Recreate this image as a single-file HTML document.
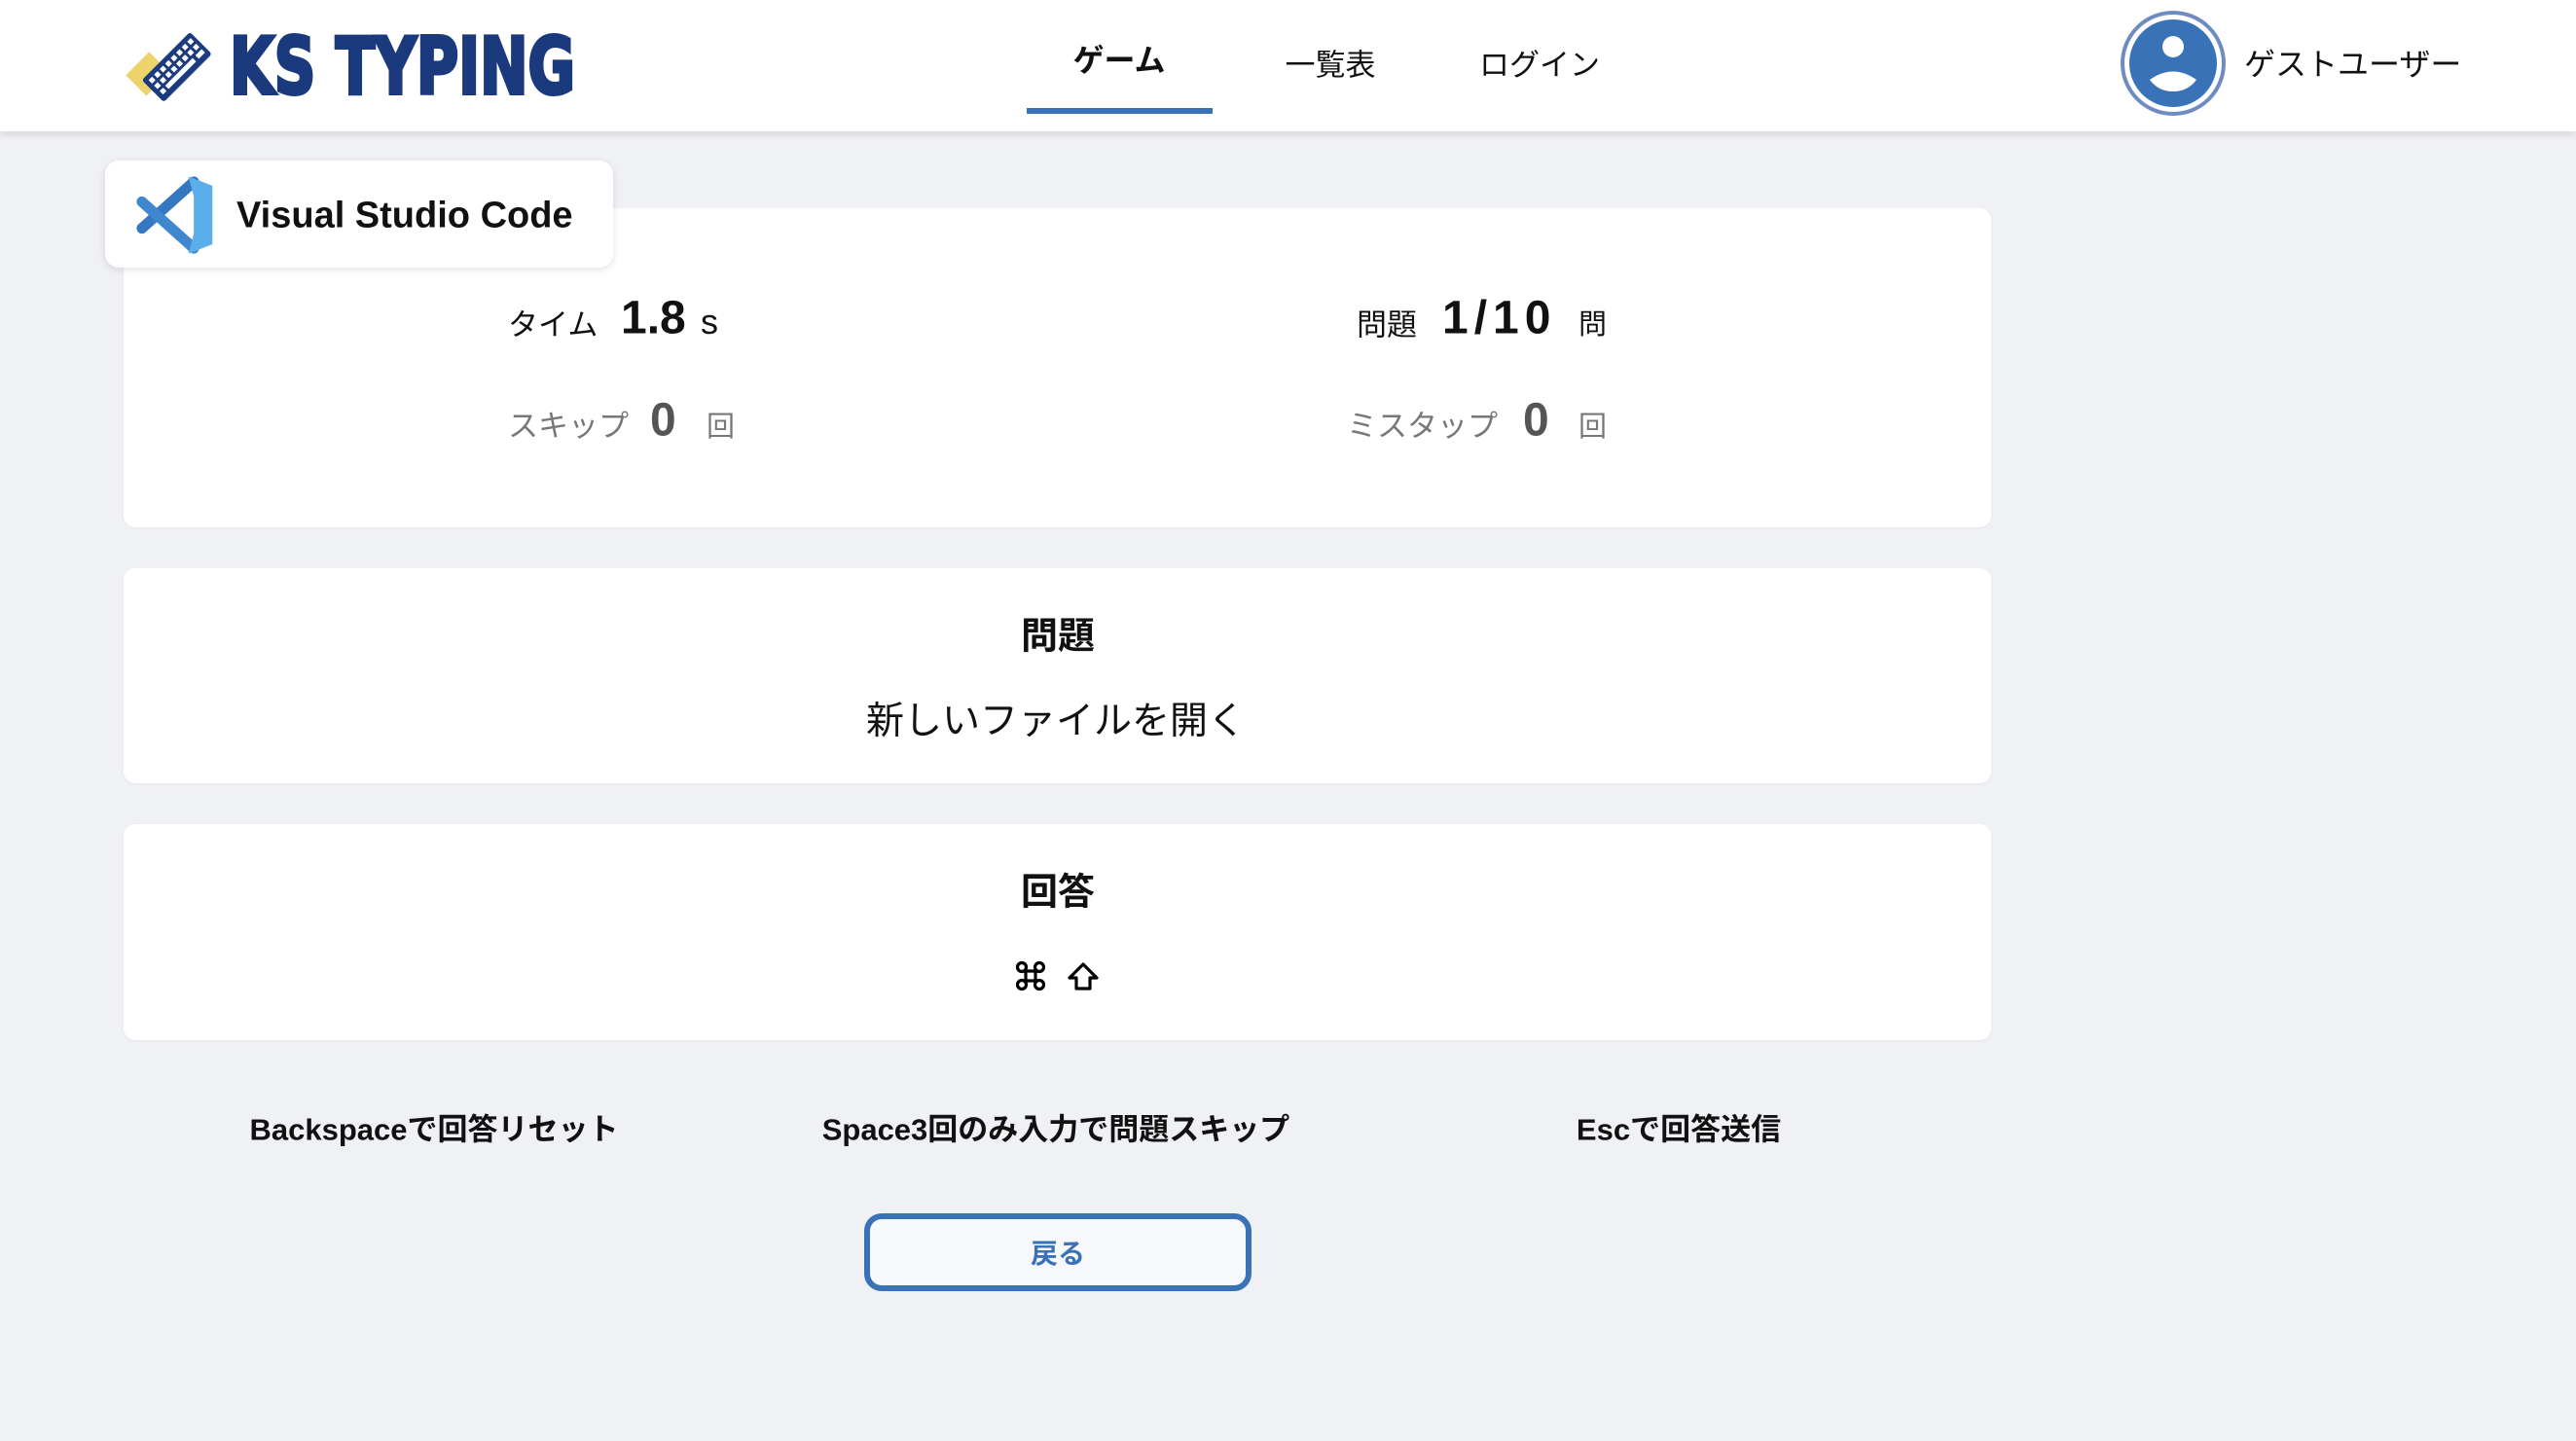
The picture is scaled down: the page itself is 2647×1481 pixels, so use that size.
<!DOCTYPE html>
<html><head><meta charset="utf-8"><style>
*{margin:0;padding:0;box-sizing:border-box}
body{width:2647px;height:1481px;background:#f0f1f5;font-family:"Liberation Sans","Noto Sans CJK JP",sans-serif;position:relative;overflow:hidden;color:#111}
.a{position:absolute;white-space:nowrap}
.hdr{position:absolute;left:0;top:0;width:2647px;height:135px;background:#fff;box-shadow:0 3px 8px rgba(0,0,0,.12)}
.card{position:absolute;left:127px;width:1919px;background:#fff;border-radius:12px;box-shadow:0 1px 3px rgba(0,0,0,.05)}
.c{transform:translate(-50%,-50%)}
.l{transform:translateY(-50%)}
</style></head><body>
<div class="hdr"></div>
<svg class="a" style="left:126px;top:26px" width="100" height="80" viewBox="0 0 100 80">
 <g transform="rotate(-45 40 40)"><rect x="6" y="22" width="34" height="30" fill="#ecd36a"/></g>
 <g transform="rotate(-45 55 45)"><rect x="22" y="28" width="70" height="32" rx="3" fill="#1c3a7e"/>
 <g fill="#fff"><rect x="27" y="33" width="5" height="5"/><rect x="35" y="33" width="5" height="5"/><rect x="43" y="33" width="5" height="5"/><rect x="51" y="33" width="5" height="5"/><rect x="59" y="33" width="5" height="5"/><rect x="67" y="33" width="5" height="5"/><rect x="75" y="33" width="5" height="5"/><rect x="83" y="33" width="5" height="5"/>
 <rect x="27" y="41" width="5" height="5"/><rect x="35" y="41" width="5" height="5"/><rect x="43" y="41" width="5" height="5"/><rect x="51" y="41" width="5" height="5"/><rect x="59" y="41" width="5" height="5"/><rect x="67" y="41" width="5" height="5"/><rect x="75" y="41" width="5" height="5"/><rect x="83" y="41" width="5" height="5"/>
 <rect x="27" y="49" width="5" height="5"/><rect x="35" y="49" width="40" height="5"/><rect x="79" y="49" width="9" height="5"/></g></g>
</svg>
<svg class="a" style="left:236px;top:30px" width="360" height="70" viewBox="0 0 360 70"><text x="0" y="66" font-family="DejaVu Sans" font-weight="bold" font-size="80" fill="#1b3a7e" stroke="#1b3a7e" stroke-width="4" textLength="355" lengthAdjust="spacingAndGlyphs">KS TYPING</text></svg>
<div class="a c" style="left:1150px;top:60px;font-size:32px;font-weight:bold">ゲーム</div>
<div class="a" style="left:1055px;top:111px;width:191px;height:6px;background:#3a72b8"></div>
<div class="a c" style="left:1367px;top:64px;font-size:31px">一覧表</div>
<div class="a c" style="left:1582px;top:64px;font-size:31px">ログイン</div>
<svg class="a" style="left:2178px;top:10px" width="110" height="110" viewBox="0 0 110 110">
 <circle cx="55" cy="55" r="52" fill="none" stroke="#6f8cc2" stroke-width="4"/>
 <circle cx="55" cy="55" r="45" fill="#3a72b8"/>
 <circle cx="55" cy="38" r="11" fill="#fff"/>
 <path d="M31 72 Q55 55 79 72 Q70 84 55 84 Q40 84 31 72 Z" fill="#fff"/>
</svg>
<div class="a l" style="left:2306px;top:64px;font-size:32px">ゲストユーザー</div>

<div class="card" style="top:214px;height:328px"></div>
<div class="a" style="left:108px;top:165px;width:522px;height:110px;background:#fff;border-radius:14px;box-shadow:0 2px 8px rgba(0,0,0,.12)"></div>
<svg class="a" style="left:138px;top:180px" width="84" height="82" viewBox="0 0 60 60">
 <line x1="44" y1="5" x2="5" y2="40" stroke="#3577c0" stroke-width="8" stroke-linecap="round"/>
 <line x1="44" y1="55" x2="5" y2="20" stroke="#3f87cf" stroke-width="8" stroke-linecap="round"/>
 <path d="M40 1 L58 8 V52 L40 59 L44 44 V16 Z" fill="#5aaeea"/>
</svg>
<div class="a l" style="left:243px;top:222px;font-size:38px;font-weight:bold">Visual Studio Code</div>

<div class="a l" style="left:522px;top:331px;font-size:31px">タイム</div>
<div class="a l" style="left:638px;top:327px;font-size:48px;font-weight:bold">1.8</div>
<div class="a l" style="left:720px;top:331px;font-size:36px">s</div>
<div class="a l" style="left:1394px;top:331px;font-size:31px">問題</div>
<div class="a l" style="left:1482px;top:327px;font-size:48px;font-weight:bold;letter-spacing:6px">1/10</div>
<div class="a l" style="left:1622px;top:331px;font-size:29px">問</div>
<div class="a l" style="left:522px;top:435px;font-size:31px;color:#777">スキップ</div>
<div class="a l" style="left:668px;top:432px;font-size:48px;font-weight:bold;color:#555">0</div>
<div class="a l" style="left:726px;top:436px;font-size:29px;color:#777">回</div>
<div class="a l" style="left:1384px;top:435px;font-size:31px;color:#777">ミスタップ</div>
<div class="a l" style="left:1565px;top:432px;font-size:48px;font-weight:bold;color:#555">0</div>
<div class="a l" style="left:1622px;top:436px;font-size:29px;color:#777">回</div>

<div class="card" style="top:584px;height:221px"></div>
<div class="a c" style="left:1087px;top:650px;font-size:38px;font-weight:bold">問題</div>
<div class="a c" style="left:1085px;top:738px;font-size:39px">新しいファイルを開く</div>

<div class="card" style="top:847px;height:222px"></div>
<div class="a c" style="left:1087px;top:913px;font-size:38px;font-weight:bold">回答</div>
<svg class="a" style="left:1043px;top:987px" width="90" height="34" viewBox="0 0 90 34">
 <g fill="none" stroke="#000" stroke-width="3.2" stroke-linejoin="round">
 <path d="M11 11 H21 V21 H11 Z"/>
 <circle cx="7" cy="7" r="4.5"/><circle cx="25" cy="7" r="4.5"/><circle cx="7" cy="25" r="4.5"/><circle cx="25" cy="25" r="4.5"/>
 <path d="M70 4 L84 18 H77 V29 H63 V18 H56 Z"/>
 </g>
 <g fill="#fff"><rect x="9" y="9" width="14" height="14" fill="none"/></g>
</svg>

<div class="a c" style="left:446px;top:1158px;font-size:31px;font-weight:bold">Backspaceで回答リセット</div>
<div class="a c" style="left:1085px;top:1158px;font-size:31px;font-weight:bold">Space3回のみ入力で問題スキップ</div>
<div class="a c" style="left:1725px;top:1158px;font-size:31px;font-weight:bold">Escで回答送信</div>

<div class="a" style="left:888px;top:1247px;width:398px;height:80px;border:6px solid #3a72b8;border-radius:18px;background:#f6f8fb"></div>
<div class="a c" style="left:1087px;top:1287px;font-size:28px;font-weight:bold;color:#3a72b8">戻る</div>
</body></html>
